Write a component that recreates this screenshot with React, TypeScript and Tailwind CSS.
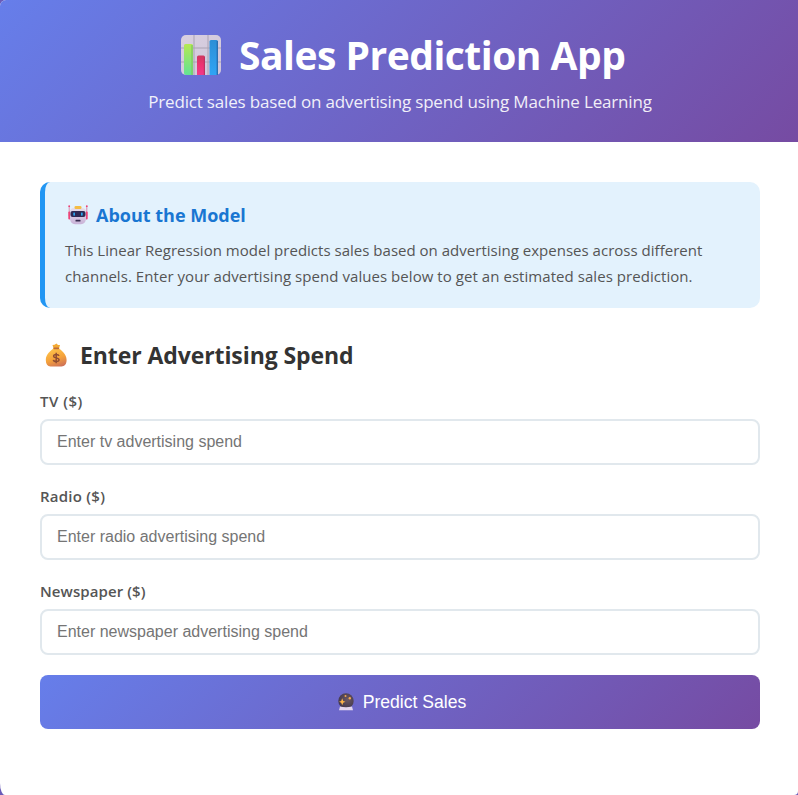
import type { ReactNode } from 'react';

function ChartIcon() {
  return (
    <svg viewBox="0 0 40 40" className="h-10 w-10 shrink-0">
      <defs>
        <linearGradient id="chart-paper" x1="0" y1="0" x2="1" y2="1">
          <stop offset="0" stopColor="#d9d0e0" />
          <stop offset="1" stopColor="#cfc6da" />
        </linearGradient>
        <linearGradient id="chart-green" x1="0" y1="0" x2="0" y2="1">
          <stop offset="0" stopColor="#b5e853" />
          <stop offset="1" stopColor="#62e394" />
        </linearGradient>
        <linearGradient id="chart-red" x1="0" y1="0" x2="0" y2="1">
          <stop offset="0" stopColor="#cf3860" />
          <stop offset="0.5" stopColor="#ee3273" />
          <stop offset="1" stopColor="#f0398a" />
        </linearGradient>
        <linearGradient id="chart-blue" x1="0" y1="0" x2="0" y2="1">
          <stop offset="0" stopColor="#2c8fd6" />
          <stop offset="1" stopColor="#2fa4f5" />
        </linearGradient>
      </defs>
      <rect width="40" height="40" rx="5" fill="url(#chart-paper)" />
      <path d="M13 0V40M27 0V40M0 13H40M0 27H40" stroke="#aaa3b3" strokeWidth="1" />
      <path d="M3 10.500a1.500 1.500 0 0 1 1.500-1.500h6a1.500 1.500 0 0 1 1.500 1.500V40H5a2 2 0 0 1-2-2Z" fill="url(#chart-green)" />
      <path d="M11 10V40" stroke="#7fc760" strokeWidth="1.200" />
      <path d="M16 22a1.500 1.500 0 0 1 1.500-1.500h5A1.500 1.500 0 0 1 24 22V40h-8Z" fill="url(#chart-red)" />
      <path d="M23.400 22V40" stroke="#bd3164" strokeWidth="1.200" />
      <path d="M28.500 6.500A1.500 1.500 0 0 1 30 5h5.500A1.500 1.500 0 0 1 37 6.500V40h-8.500Z" fill="url(#chart-blue)" />
      <path d="M36.300 6V40" stroke="#2871b4" strokeWidth="1.400" />
    </svg>
  );
}

function RobotIcon() {
  return (
    <svg viewBox="0 0 20 20" className="h-5 w-5 shrink-0">
      <defs>
        <linearGradient id="robot-head" x1="0" y1="0" x2="0" y2="1">
          <stop offset="0" stopColor="#e9dfeb" />
          <stop offset="1" stopColor="#c9b3d8" />
        </linearGradient>
      </defs>
      <path d="M1.200 1V11M18.800 1V11" stroke="#d98aac" strokeWidth="1" />
      <circle cx="1.200" cy="1.200" r="0.900" fill="#ee3f73" />
      <circle cx="18.800" cy="1.200" r="0.900" fill="#ee3f73" />
      <rect x="0.300" y="6.500" width="2.200" height="8" rx="1" fill="#ee4478" />
      <rect x="17.500" y="6.500" width="2.200" height="8" rx="1" fill="#ee4478" />
      <path d="M2 7Q2 3 6 2.700H14Q18 3 18 7V14Q17.500 19 13 19.200H7Q2.500 19 2 14Z" fill="url(#robot-head)" />
      <rect x="6.500" y="1" width="7" height="3" rx="1.300" fill="#f4bd45" />
      <rect x="2.500" y="6" width="15" height="6" rx="2" fill="#302a52" />
      <rect x="5.300" y="7.400" width="1.700" height="3.300" rx="0.600" fill="#2ca5ed" />
      <rect x="13" y="7.400" width="1.700" height="3.300" rx="0.600" fill="#2ca5ed" />
      <rect x="7.500" y="14.800" width="5" height="1.800" rx="0.500" fill="#392c50" />
    </svg>
  );
}

function MoneyBagIcon() {
  return (
    <svg viewBox="0 0 24 24" className="h-6 w-6 shrink-0">
      <defs>
        <linearGradient id="bag-body" x1="0.300" y1="0" x2="0.700" y2="1">
          <stop offset="0" stopColor="#ffc54b" />
          <stop offset="0.550" stopColor="#f5a23b" />
          <stop offset="1" stopColor="#cf7257" />
        </linearGradient>
      </defs>
      <path d="M8.500 2L10.500 1.800L12.500 .6L14 1.900L16 2L14.900 6H9.700Z" fill="#f3aa34" />
      <path d="M9.500 5.500H15C17.500 7.500 22.600 11 22.600 17C22.600 21.500 20.500 23.200 17.500 23.500H6.500C3.500 23.200 1.800 21 1.800 17C1.800 11 7 7.500 9.500 5.500Z" fill="url(#bag-body)" />
      <rect x="9.400" y="4.600" width="5.800" height="1.700" rx="0.800" fill="#bf6b38" />
      <path d="M12.200 9.800V20.200M15 12.900C14.500 11.300 9.600 10.700 9.600 13.200C9.600 15.500 15 14.200 15 16.800C15 19.400 9.600 18.900 9.400 16.900" fill="none" stroke="#8f4d32" strokeWidth="1.500" />
    </svg>
  );
}

function CrystalBallIcon() {
  return (
    <svg viewBox="0 0 18 18" className="h-[18px] w-[18px] shrink-0">
      <defs>
        <radialGradient id="ball-glass" cx="0.600" cy="0.400" r="0.650">
          <stop offset="0" stopColor="#6c5862" />
          <stop offset="1" stopColor="#40364c" />
        </radialGradient>
      </defs>
      <circle cx="9" cy="8" r="7.700" fill="url(#ball-glass)" />
      <path d="M3 13.500Q9 14.800 15 13.500L16 17.300H2Z" fill="#e2d5ef" />
      <path d="M5.200 5.300L6.200 7.900L8.500 8.800L6.200 9.700L5.200 12.300L4.200 9.700L2 8.800L4.200 7.900Z" fill="#fcb44a" />
      <circle cx="8.500" cy="2.900" r="1" fill="#f4a84d" />
      <circle cx="12.800" cy="5.300" r="1.200" fill="#f4a84d" />
    </svg>
  );
}

function Field({ label, name }: { label: ReactNode; name: string }) {
  return (
    <div className="mb-5">
      <label htmlFor={name} className="mb-[7px] block h-[22px] text-[15px] leading-[22px] font-semibold tracking-[0.09px] text-[#555]">
        {label}
      </label>
      <input
        id={name}
        placeholder={`Enter ${name} advertising spend`}
        className="block h-[46px] w-full rounded-lg border-2 border-[#e1e8ed] bg-white px-[15px] font-['Liberation_Sans',sans-serif] text-base placeholder:text-[#757575] outline-none"
      />
    </div>
  );
}

export default function App() {
  return (
    <div className="h-[795px] w-full overflow-hidden bg-[#6a5bb8] font-['Open_Sans','Noto_Sans',sans-serif]">
      <div className="h-full overflow-hidden rounded-tl-[6px] rounded-br-[4px] rounded-bl-[5px_12px] bg-white">
        <header className="flex h-[142px] flex-col items-center bg-[linear-gradient(135deg,#667eea_0%,#764ba2_100%)] pt-[27px] text-white">
          <h1 className="flex h-14 w-[446px] items-center gap-[18px] pl-[5px] text-[39px] font-bold whitespace-nowrap">
            <ChartIcon />
            <span className="tracking-[-0.5px]">Sales Prediction App</span>
          </h1>
          <p className="mt-1.5 pl-0.5 text-[17px] leading-[26px] tracking-[-0.17px] whitespace-nowrap opacity-90">
            <span>Predict sales based on advertising spend using Machine Learning</span>
          </p>
        </header>
        <main className="pt-10 pr-[38px] pl-10">
          <section className="h-[126px] rounded-[10px] border-l-[5px] border-[#2196f3] bg-[#e3f2fd] pt-5 pl-5">
            <h3 className="flex h-[26px] items-center gap-2 pl-[3px] text-[18px] font-bold whitespace-nowrap text-[#1976d2]">
              <RobotIcon />
              <span>About the Model</span>
            </h3>
            <p className="mt-2.5 text-[15px] leading-[25.6px] whitespace-nowrap text-[#555]">
              <span className="tracking-[0.015px]">This Linear Regression model predicts sales based on advertising expenses across different</span>
              <br />
              <span className="tracking-[0.055px]">channels. Enter your advertising spend values below to get an estimated sales prediction.</span>
            </p>
          </section>
          <h2 className="mt-[31px] flex h-8 items-center gap-3 pl-1 text-[23px] font-bold tracking-[-0.09px] whitespace-nowrap text-[#333]">
            <MoneyBagIcon />
            <span>Enter Advertising Spend</span>
          </h2>
          <form className="mt-[19px]" onSubmit={(event) => event.preventDefault()}>
            <Field label={<span className="tracking-[0.5px]">TV ($)</span>} name="tv" />
            <Field label={<span className="tracking-[0.25px]">Radio ($)</span>} name="radio" />
            <Field label="Newspaper ($)" name="newspaper" />
            <button className="flex h-[54px] w-full items-center justify-center gap-2 rounded-lg bg-[linear-gradient(135deg,#667eea_0%,#764ba2_100%)] pl-[3px] font-['Liberation_Sans',sans-serif] text-[17.6px] text-white">
              <CrystalBallIcon />
              <span>Predict Sales</span>
            </button>
          </form>
        </main>
      </div>
    </div>
  );
}
